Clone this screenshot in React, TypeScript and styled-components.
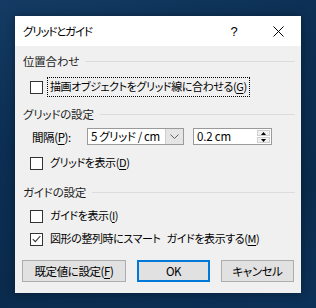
import React from 'react'
import styled, { createGlobalStyle, css } from 'styled-components'

const GlobalStyle = createGlobalStyle`
  html, body {
    margin: 0;
    padding: 0;
    width: 316px;
    height: 308px;
    overflow: hidden;
  }
  body {
    font-family: 'Noto Sans CJK JP', 'Noto Sans', sans-serif;
    font-feature-settings: 'palt';
    -webkit-font-smoothing: antialiased;
  }
`

const Desktop = styled.div`
  width: 316px;
  height: 308px;
  box-sizing: border-box;
  padding: 16px 15px 0 15px;
  background: linear-gradient(160deg, #143b63 0%, #0b2e52 35%, #0a2b4c 70%, #0c3158 100%);
`

const Dialog = styled.div`
  width: 286px;
  height: 277px;
  display: flex;
  flex-direction: column;
  background: #f0f0f0;
  box-shadow: 0 0 8px rgba(0, 0, 0, 0.35);
`

const TitleBar = styled.div`
  height: 30px;
  flex: none;
  display: flex;
  align-items: center;
  background: #ffffff;
  padding-left: 8px;
`

const TitleText = styled.div`
  flex: 1;
  font-size: 11.5px;
  color: #000;
  letter-spacing: -1.2px;
`

const HelpButton = styled.div`
  width: 20px;
  text-align: center;
  font-family: 'Liberation Sans', sans-serif;
  font-size: 13px;
  color: #000;
  margin-right: 27px;
`

const CloseButton = styled.div`
  width: 14px;
  height: 14px;
  display: flex;
  align-items: center;
  justify-content: center;
  margin-right: 16px;
`

const Body = styled.div`
  flex: 1;
  display: flex;
  flex-direction: column;
  padding: 0 6px 0 8px;
  font-size: 11px;
  letter-spacing: -0.4px;
  color: #000;
`

const GroupHeader = styled.div<{ $top: number }>`
  height: 14px;
  margin-top: ${p => p.$top}px;
  display: flex;
  align-items: center;
  gap: 6px;
  font-size: 11.5px;
  letter-spacing: -0.2px;
  color: #1e1e1e;
  &::after {
    content: '';
    flex: 1;
    height: 1px;
    background: #dcdcdc;
  }
`

const CheckRow = styled.div<{ $top: number }>`
  height: 20px;
  margin-top: ${p => p.$top}px;
  display: flex;
  align-items: center;
  padding-left: 7px;
`

const Box = styled.div`
  width: 11px;
  height: 11px;
  border: 1px solid #333333;
  background: #ffffff;
  flex: none;
  display: flex;
  align-items: center;
  justify-content: center;
`

const CheckLabel = styled.span<{ $focused?: boolean }>`
  margin-left: 4px;
  padding: 1px 2px 2px 2px;
  line-height: 15px;
  word-spacing: 4px;
  border: 1px solid transparent;
  ${p =>
    p.$focused &&
    css`
      border: 1px dotted #000;
    `}
`

const Key = styled.span`
  text-decoration: underline;
  text-underline-offset: 2px;
`

const FieldRow = styled.div<{ $top: number }>`
  height: 17px;
  margin-top: ${p => p.$top}px;
  display: flex;
  align-items: center;
  padding-left: 9px;
`

const FieldLabel = styled.span`
  width: 55px;
  flex: none;
  font-size: 11.5px;
`

const Combo = styled.div`
  width: 95px;
  height: 15px;
  border: 1px solid #9a9a9a;
  background: #fff;
  display: flex;
  align-items: stretch;
`

const ComboValue = styled.div`
  flex: 1;
  padding-left: 3px;
  line-height: 15px;
  font-size: 11.5px;
  letter-spacing: -0.4px;
  white-space: nowrap;
  overflow: hidden;
`

const ComboButton = styled.div`
  width: 17px;
  background: #e5e5e5;
  border-left: 1px solid #cfcfcf;
  display: flex;
  align-items: center;
  justify-content: center;
`

const Spin = styled.div`
  margin-left: 9px;
  width: 77px;
  height: 15px;
  border: 1px solid #9a9a9a;
  background: #fff;
  display: flex;
  align-items: stretch;
`

const SpinValue = styled.div`
  flex: 1;
  padding-left: 3px;
  line-height: 15px;
  font-size: 11.5px;
  letter-spacing: -0.2px;
`

const SpinButtons = styled.div`
  width: 13px;
  margin: 1px 1px 1px 0;
  display: flex;
  flex-direction: column;
  gap: 1px;
`

const SpinButton = styled.div`
  flex: 1;
  background: #f0f0f0;
  border: 1px solid #cfcfcf;
  display: flex;
  align-items: center;
  justify-content: center;
`

const ButtonRow = styled.div`
  margin-top: 11px;
  height: 22px;
  display: flex;
  gap: 11px;
  margin-left: -1px;
`

const Button = styled.div<{ $width: number; $default?: boolean }>`
  width: ${p => p.$width}px;
  height: 22px;
  box-sizing: border-box;
  display: flex;
  align-items: center;
  justify-content: center;
  background: #e1e1e1;
  border: 1px solid #adadad;
  font-size: 11.5px;
  letter-spacing: -0.4px;
  ${p =>
    p.$default &&
    css`
      border: 2px solid #0078d7;
    `}
`

const CheckBox = ({ checked }: { checked?: boolean }) => (
  <Box>
    {checked && (
      <svg width="9" height="8" viewBox="0 0 9 8">
        <path d="M0.8 4.2 L3.3 6.7 L8.3 1" fill="none" stroke="#333" strokeWidth="1.1" />
      </svg>
    )}
  </Box>
)

export default function App() {
  return (
    <>
      <GlobalStyle />
      <Desktop>
        <Dialog>
          <TitleBar>
            <TitleText>グリッドとガイド</TitleText>
            <HelpButton>?</HelpButton>
            <CloseButton>
              <svg width="11" height="11" viewBox="0 0 11 11">
                <path d="M0.5 0.5 L10.5 10.5 M10.5 0.5 L0.5 10.5" stroke="#000" strokeWidth="1" />
              </svg>
            </CloseButton>
          </TitleBar>
          <Body>
            <GroupHeader $top={8}>位置合わせ</GroupHeader>
            <CheckRow $top={9}>
              <CheckBox />
              <CheckLabel $focused>
                描画オブジェクトをグリッド線に合わせる(<Key>G</Key>)
              </CheckLabel>
            </CheckRow>
            <GroupHeader $top={10}>グリッドの設定</GroupHeader>
            <FieldRow $top={7}>
              <FieldLabel>
                間隔(<Key>P</Key>):
              </FieldLabel>
              <Combo>
                <ComboValue>5 グリッド / cm</ComboValue>
                <ComboButton>
                  <svg width="9" height="5" viewBox="0 0 9 5">
                    <path d="M0.5 0.5 L4.5 4.5 L8.5 0.5" fill="none" stroke="#606060" strokeWidth="1" />
                  </svg>
                </ComboButton>
              </Combo>
              <Spin>
                <SpinValue>0.2 cm</SpinValue>
                <SpinButtons>
                  <SpinButton>
                    <svg width="5" height="3" viewBox="0 0 5 3">
                      <path d="M0 3 L2.5 0 L5 3 Z" fill="#000" />
                    </svg>
                  </SpinButton>
                  <SpinButton>
                    <svg width="5" height="3" viewBox="0 0 5 3">
                      <path d="M0 0 L2.5 3 L5 0 Z" fill="#000" />
                    </svg>
                  </SpinButton>
                </SpinButtons>
              </Spin>
            </FieldRow>
            <CheckRow $top={8}>
              <CheckBox />
              <CheckLabel>
                グリッドを表示(<Key>D</Key>)
              </CheckLabel>
            </CheckRow>
            <GroupHeader $top={12}>ガイドの設定</GroupHeader>
            <CheckRow $top={7}>
              <CheckBox />
              <CheckLabel>
                ガイドを表示(<Key>I</Key>)
              </CheckLabel>
            </CheckRow>
            <CheckRow $top={3}>
              <CheckBox checked />
              <CheckLabel>
                図形の整列時にスマート ガイドを表示する(<Key>M</Key>)
              </CheckLabel>
            </CheckRow>
            <ButtonRow>
              <Button $width={104}>
                既定値に設定(<Key>F</Key>)
              </Button>
              <Button $width={73} $default>
                OK
              </Button>
              <Button $width={73}>キャンセル</Button>
            </ButtonRow>
          </Body>
        </Dialog>
      </Desktop>
    </>
  )
}
